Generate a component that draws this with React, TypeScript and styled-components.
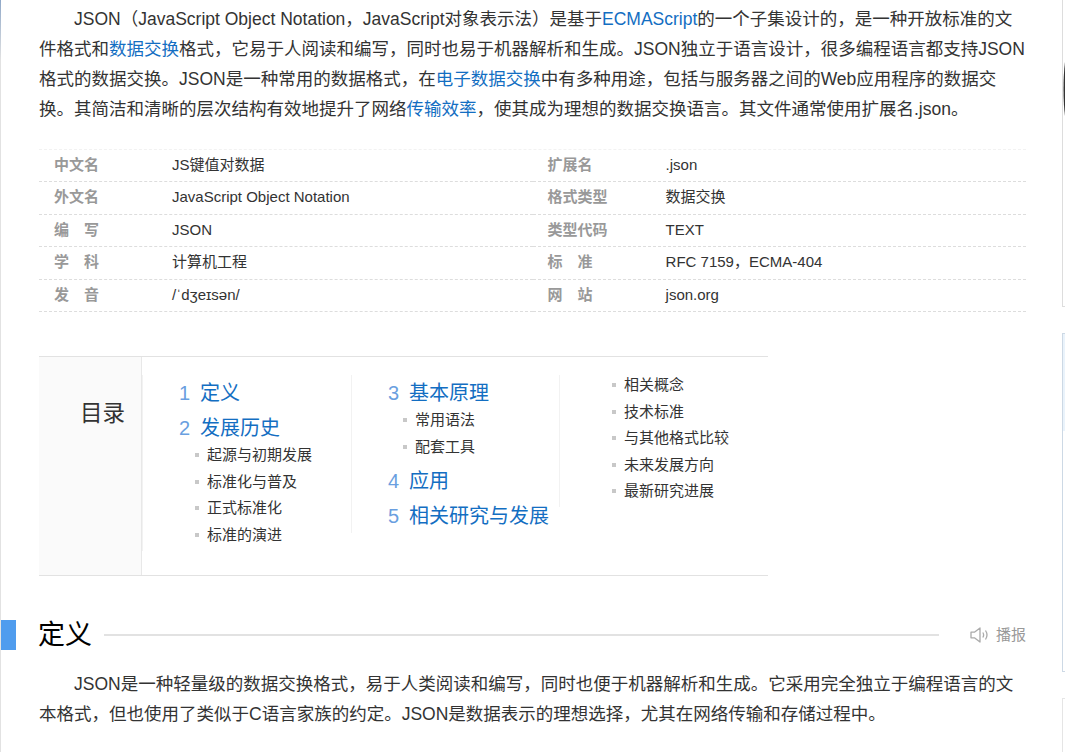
import React from "react";
import styled, { createGlobalStyle } from "styled-components";

const Global = createGlobalStyle`
  html, body { margin: 0; padding: 0; background: #fff; }
  body { font-family: "Liberation Sans", "Noto Sans CJK SC", sans-serif; color: #333; overflow: hidden; }
  a { text-decoration: none; color: #136ec2; }
`;

const Page = styled.div`
  display: flex;
  height: 752px;
  width: 1065px;
  overflow: hidden;
  border-left: 1px solid #e2e2e2;
  box-sizing: border-box;
`;
const LeftAccent = styled.div`
  position: absolute;
  left: 0;
  top: 0;
  width: 1px;
  height: 60px;
  background: linear-gradient(#8fa8c8, #e2e2e2);
`;
const Main = styled.main`
  width: 1025px;
  box-sizing: border-box;
  flex: none;
  padding-top: 4px;
`;
const Content = styled.div`
  margin-left: 38px;
  width: 987px;
`;
const Para = styled.p`
  margin: 0;
  font-size: 17.5px;
  line-height: 30px;
  text-indent: 35px;
  color: #333;
`;
const InfoTable = styled.div`
  margin-top: 25px;
  display: grid;
  grid-template-columns: 493.6px 493.4px;
  border-top: 1px dashed #f2f2f2;
`;
const InfoRow = styled.div`
  display: flex;
  height: 32.4px;
  line-height: 30px;
  box-sizing: border-box;
  border-bottom: 1.3px dashed #ddd;
  font-size: 15px;
`;
const InfoLabel = styled.span`
  flex: none;
  width: 118px;
  margin-left: 15px;
  font-weight: 700;
  color: #999;
  white-space: pre;
`;
const InfoValue = styled.span`
  color: #333;
`;
const Toc = styled.nav`
  margin-top: 44px;
  width: 729px;
  height: 220px;
  box-sizing: border-box;
  border-top: 1px solid #e2e2e2;
  border-bottom: 1px solid #e2e2e2;
  display: flex;
`;
const TocTitle = styled.div`
  flex: none;
  width: 103px;
  box-sizing: border-box;
  background: #fafafa;
  border-right: 1px solid #e8e8e8;
  text-align: right;
  padding: 42px 16px 0 0;
  font-size: 22.5px;
  line-height: 30px;
  color: #333;
`;
const TocCol = styled.div<{ $w: number }>`
  margin: 18px 0 0;
  flex: none;
  width: ${(p) => p.$w}px;
  box-sizing: border-box;
  align-self: flex-start;
  border-left: 1px solid #f2f2f2;
`;
const Level1 = styled.div`
  display: flex;
  height: 35px;
  line-height: 37px;
  padding-left: 36px;
  font-size: 20px;
  white-space: nowrap;
`;
const Num = styled.span`
  color: #6a9fe0;
  width: 21px;
  flex: none;
`;
const SubList = styled.ul<{ $pl: number }>`
  list-style: none;
  margin: -4px 0 4px;
  padding: 0 0 0 ${(p) => p.$pl}px;
`;
const Level2 = styled.li`
  display: flex;
  align-items: center;
  height: 26.5px;
  box-sizing: border-box;
  padding-top: 2px;
  line-height: 24px;
  font-size: 15px;
  color: #333;
  white-space: nowrap;
  &::before {
    content: "";
    width: 4px;
    height: 4px;
    background: #c8c8c8;
    margin-right: 8px;
    flex: none;
  }
`;
const SectionHead = styled.div`
  margin-top: 44px;
  margin-left: -38px;
  display: flex;
  align-items: center;
  height: 30px;
`;
const Marker = styled.span`
  width: 15px;
  height: 30px;
  background: #4f9cee;
  flex: none;
`;
const SectionTitle = styled.h2`
  margin: 0 12px 0 22px;
  font-size: 27px;
  font-weight: 400;
  color: #000;
  line-height: 32px;
`;
const Rule = styled.span`
  flex: 1;
  height: 2px;
  background: #e2e2e2;
`;
const ListenBtn = styled.span`
  display: flex;
  align-items: center;
  margin-left: 31px;
  color: #999;
  font-size: 15px;
  line-height: 30px;
  gap: 7px;
`;
const SectionBody = styled(Para)`
  margin-top: 19px;
`;
const Rail = styled.aside`
  flex: none;
  margin-left: 36px;
  width: 3px;
  display: flex;
  flex-direction: column;
  gap: 26px;
`;
const RailCard = styled.div<{ $h: number; $c: string; $open?: boolean }>`
  height: ${(p) => p.$h}px;
  flex: none;
  box-sizing: border-box;
  border-left: 1px solid ${(p) => p.$c};
  border-bottom: 1px solid ${(p) => p.$c};
  border-top: ${(p) => (p.$open ? "none" : `1px solid ${p.$c}`)};
`;
const Smile = styled.svg`
  display: block;
  margin-top: 62px;
`;
const Tint = styled.div`
  height: 97px;
  background: #eaf3fb;
`;

const Speaker = () => (
  <svg width="19" height="16" viewBox="0 0 19 16" fill="none" stroke="#aaa" strokeWidth="1.3">
    <path d="M1 5.2h3.4L10 1v14l-5.600-4.200H1z" strokeLinejoin="round" />
    <path d="M12.800 5.500c1 1.500 1 3.500 0 5M15.500 3.500c1.800 2.700 1.800 6.300 0 9" />
  </svg>
);

const info = [
  ["中文名", "JS键值对数据", "扩展名", ".json"],
  ["外文名", "JavaScript Object Notation", "格式类型", "数据交换"],
  ["编\u3000写", "JSON", "类型代码", "TEXT"],
  ["学\u3000科", "计算机工程", "标\u3000准", "RFC 7159，ECMA-404"],
  ["发\u3000音", "/ˈdʒeɪsən/", "网\u3000站", "json.org"],
];

export default function App() {
  return (
    <>
      <Global />
      <LeftAccent />
      <Page>
        <Main>
          <Content>
            <Para>
              JSON（JavaScript Object Notation，JavaScript对象表示法）是基于<a href="#a">ECMAScript</a>的一个子集设计的，是一种开放标准的文件格式和<a href="#b">数据交换</a>格式，它易于人阅读和编写，同时也易于机器解析和生成。JSON独立于语言设计，很多编程语言都支持JSON格式的数据交换。JSON是一种常用的数据格式，在<a href="#c">电子数据交换</a>中有多种用途，包括与服务器之间的Web应用程序的数据交换。其简洁和清晰的层次结构有效地提升了网络<a href="#d">传输效率</a>，使其成为理想的数据交换语言。其文件通常使用扩展名.json。
            </Para>
            <InfoTable>
              {info.flatMap((r) => [
                <InfoRow key={r[0]}>
                  <InfoLabel>{r[0]}</InfoLabel>
                  <InfoValue>{r[1]}</InfoValue>
                </InfoRow>,
                <InfoRow key={r[2]}>
                  <InfoLabel>{r[2]}</InfoLabel>
                  <InfoValue>{r[3]}</InfoValue>
                </InfoRow>,
              ])}
            </InfoTable>
            <Toc>
              <TocTitle>目录</TocTitle>
              <TocCol $w={209}>
                <Level1><Num>1</Num><a href="#1">定义</a></Level1>
                <Level1><Num>2</Num><a href="#2">发展历史</a></Level1>
                <SubList $pl={52}>
                  <Level2>起源与初期发展</Level2>
                  <Level2>标准化与普及</Level2>
                  <Level2>正式标准化</Level2>
                  <Level2>标准的演进</Level2>
                </SubList>
              </TocCol>
              <TocCol $w={208}>
                <Level1><Num>3</Num><a href="#3">基本原理</a></Level1>
                <SubList $pl={51}>
                  <Level2>常用语法</Level2>
                  <Level2>配套工具</Level2>
                </SubList>
                <Level1><Num>4</Num><a href="#4">应用</a></Level1>
                <Level1><Num>5</Num><a href="#5">相关研究与发展</a></Level1>
              </TocCol>
              <TocCol $w={209}>
                <SubList $pl={52}>
                  <Level2>相关概念</Level2>
                  <Level2>技术标准</Level2>
                  <Level2>与其他格式比较</Level2>
                  <Level2>未来发展方向</Level2>
                  <Level2>最新研究进展</Level2>
                </SubList>
              </TocCol>
            </Toc>
            <SectionHead>
              <Marker />
              <SectionTitle>定义</SectionTitle>
              <Rule />
              <ListenBtn><Speaker />播报</ListenBtn>
            </SectionHead>
            <SectionBody>
              JSON是一种轻量级的数据交换格式，易于人类阅读和编写，同时也便于机器解析和生成。它采用完全独立于编程语言的文本格式，但也使用了类似于C语言家族的约定。JSON是数据表示的理想选择，尤其在网络传输和存储过程中。
            </SectionBody>
          </Content>
        </Main>
        <Rail>
          <RailCard $h={307} $c="#ddd" $open>
            <Smile width="2" height="54" viewBox="0 0 2 54">
              <path d="M2 0C0 14 0 40 2 54z" fill="#333" />
            </Smile>
          </RailCard>
          <RailCard $h={339} $c="#cdd9e5">
            <Tint />
          </RailCard>
          <RailCard $h={60} $c="#e5e5e5" />
        </Rail>
      </Page>
    </>
  );
}
